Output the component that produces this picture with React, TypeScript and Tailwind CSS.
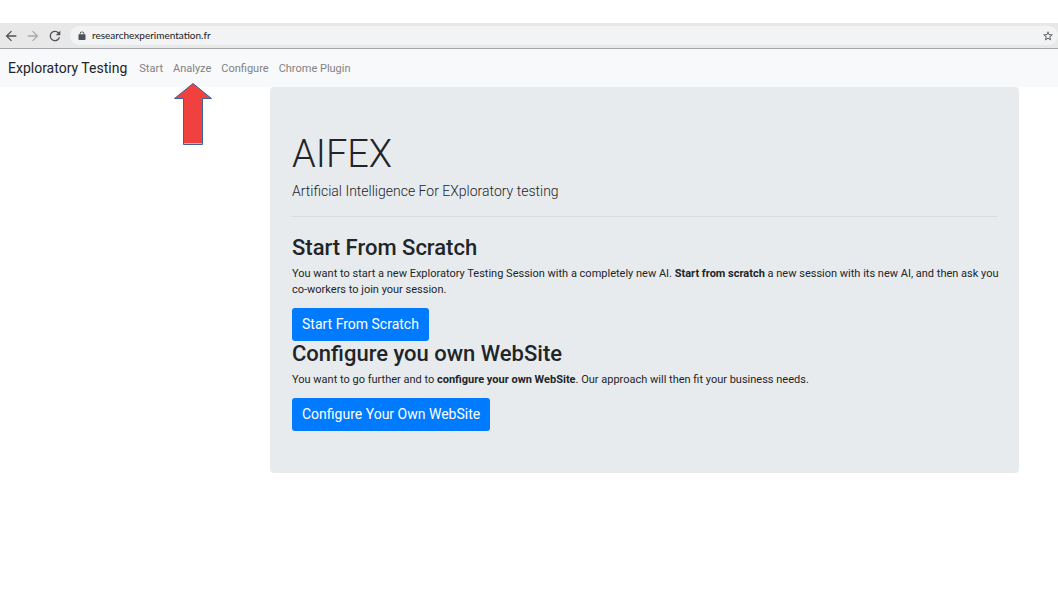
import type { ReactNode } from "react";

function BackIcon() {
  return (
    <svg className="h-4 w-4" viewBox="0 0 24 24" fill="currentColor" aria-hidden="true">
      <path d="M20 11H7.83l5.59-5.59L12 4l-8 8 8 8 1.41-1.41L7.83 13H20v-2z" />
    </svg>
  );
}

function ForwardIcon() {
  return (
    <svg className="h-4 w-4" viewBox="0 0 24 24" fill="currentColor" aria-hidden="true">
      <path d="M12 4l-1.41 1.41L16.17 11H4v2h12.17l-5.58 5.59L12 20l8-8z" />
    </svg>
  );
}

function ReloadIcon() {
  return (
    <svg className="h-4 w-4" viewBox="0 0 24 24" fill="currentColor" aria-hidden="true">
      <path d="M17.65 6.35A7.96 7.96 0 0 0 12 4a8 8 0 1 0 7.73 10h-2.08A6 6 0 1 1 12 6c1.66 0 3.14.69 4.22 1.78L13 11h7V4l-2.35 2.35z" />
    </svg>
  );
}

function LockIcon() {
  return (
    <svg className="h-[9px] w-2 shrink-0" viewBox="2 0 20 23" fill="currentColor" aria-hidden="true">
      <path d="M19 8h-1V7A6 6 0 0 0 6 7v1H5a2 2 0 0 0-2 2v11a2 2 0 0 0 2 2h14a2 2 0 0 0 2-2V10a2 2 0 0 0-2-2zM8 8V7a4 4 0 0 1 8 0v1H8z" />
    </svg>
  );
}

function StarIcon() {
  return (
    <svg className="h-3 w-3" viewBox="0 0 24 24" fill="currentColor" aria-hidden="true">
      <path d="M22 9.24l-7.19-.62L12 2 9.19 8.63 2 9.24l5.46 4.73L5.82 21 12 17.27 18.18 21l-1.63-7.03L22 9.24zM12 15.4l-3.76 2.27 1-4.28-3.32-2.88 4.38-.38L12 6.1l1.71 4.04 4.38.38-3.32 2.88 1 4.28L12 15.4z" />
    </svg>
  );
}

function BrowserBar() {
  return (
    <div className="flex h-[26px] items-center border-b border-[#a5a6a9] bg-[#e8e8e8] pl-[3px] text-[#4f5357]">
      <div className="flex items-center gap-[6px]">
        <button type="button" aria-label="Back">
          <BackIcon />
        </button>
        <button type="button" aria-label="Forward" className="text-[#a9abad]">
          <ForwardIcon />
        </button>
        <button type="button" aria-label="Reload">
          <ReloadIcon />
        </button>
      </div>
      <div className="ml-[7px] flex h-[19px] flex-1 items-center gap-[6px] rounded-full bg-[#f1f3f4] pr-1 pl-2">
        <LockIcon />
        <input
          type="text"
          aria-label="Address"
          defaultValue="researchexperimentation.fr"
          className="min-w-0 flex-1 bg-transparent font-[Lato,sans-serif] text-[10px] text-[#202124] outline-none"
        />
        <button type="button" aria-label="Bookmark this page">
          <StarIcon />
        </button>
      </div>
    </div>
  );
}

function PointerArrow() {
  return (
    <svg
      className="pointer-events-none absolute top-full left-0 mt-1 h-[63px] w-10"
      viewBox="0 0 40 63"
      aria-hidden="true"
    >
      <path
        d="M20 0.500L38.500 15.500H29.500V61.500H10.500V15.500H1.500Z"
        fill="#f0413e"
        stroke="#3c629c"
        strokeWidth="1"
      />
      <path d="M11 60.500H29" stroke="#f7a09e" strokeWidth="1" />
    </svg>
  );
}

function NavBar() {
  return (
    <nav className="flex items-center gap-3 bg-[#f8f9fa] px-2 pt-[9px] pb-2">
      <a href="#home" className="text-[14px] leading-[21px] text-[#212529]">
        Exploratory Testing
      </a>
      <div className="flex gap-[10px] text-[11px] leading-[21px] text-[#818283]">
        <a href="#start">Start</a>
        <div className="relative">
          <a href="#analyze">Analyze</a>
          <PointerArrow />
        </div>
        <a href="#configure">Configure</a>
        <a href="#plugin">Chrome Plugin</a>
      </div>
    </nav>
  );
}

function Section({ title, action, children }: { title: string; action: string; children: ReactNode }) {
  return (
    <section>
      <h2 className="mb-[5px] text-[22px] leading-[26px] font-medium">{title}</h2>
      <p className="-mr-2 mb-[10px] text-[11px] leading-4">{children}</p>
      <button
        type="button"
        className="block rounded-[3px] bg-[#007bff] px-[10px] py-[6px] text-[14px] leading-[21px] text-white"
      >
        {action}
      </button>
    </section>
  );
}

export default function App() {
  return (
    <div className="bg-white pt-[23px] font-[Roboto,sans-serif] text-[#212529]">
      <BrowserBar />
      <NavBar />
      <main className="pr-[39px] pl-[270px]">
        <div className="rounded-[4px] bg-[#e8ebee] px-[22px] pt-[44px] pb-[42px]">
          <h1 className="mb-1 text-[38px] leading-[46px] font-light">AIFEX</h1>
          <p className="text-[14px] leading-[21px] font-light">
            Artificial Intelligence For EXploratory testing
          </p>
          <hr className="mt-[14px] mb-[18px] border-[#d9dcdf]" />
          <Section title="Start From Scratch" action="Start From Scratch">
            You want to start a new Exploratory Testing Session with a completely new AI.{" "}
            <strong>Start from scratch</strong> a new session with its new AI, and then ask you co-workers to
            join your session.
          </Section>
          <Section title="Configure you own WebSite" action="Configure Your Own WebSite">
            You want to go further and to <strong>configure your own WebSite</strong>. Our approach will then
            fit your business needs.
          </Section>
        </div>
      </main>
    </div>
  );
}
